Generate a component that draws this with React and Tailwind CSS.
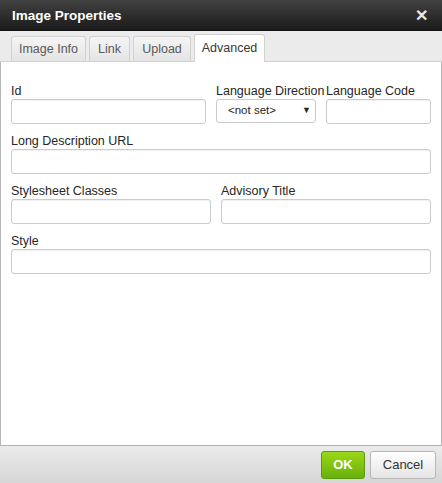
export default function App() {
  const font = { fontFamily: '"Liberation Sans", Arial, sans-serif' };
  const inputCls =
    'h-[25px] w-full rounded-[3px] border border-[#c9cccf] bg-white shadow-[inset_0_1px_1px_rgba(0,0,0,0.06)]';
  const labelCls = 'h-[16px] whitespace-nowrap leading-[17px]';
  const tabs = [
    { label: 'Image Info', w: 'w-[75px]' },
    { label: 'Link', w: 'w-[41px]' },
    { label: 'Upload', w: 'w-[58px]' },
  ];

  return (
    <div className="flex h-[483px] w-[442px] flex-col bg-white text-[12.5px] text-[#262626]" style={font}>
      {/* Title bar */}
      <div className="flex h-[31px] items-center justify-between border-b border-[#151515] bg-gradient-to-b from-[#424242] to-[#1b1b1b] pl-3 pr-[14px] pt-[2px]">
        <span className="text-[13.5px] font-bold text-white">Image Properties</span>
        <span className="text-[16px] font-bold leading-none text-[#e6e6e6]">✕</span>
      </div>

      {/* Tabs */}
      <div className="flex h-[31px] items-end gap-[3px] border-b border-[#d1d1d1] bg-[#ebebeb] px-[11px]">
        {tabs.map((t) => (
          <div
            key={t.label}
            className={`flex h-[25px] items-center justify-center rounded-t-[3px] border border-b-0 border-[#d1d1d1] bg-gradient-to-b from-[#f5f5f5] to-[#e4e4e4] text-[#595959] ${t.w}`}
          >
            {t.label}
          </div>
        ))}
        <div className="-mb-px flex h-[28px] w-[71px] items-center justify-center rounded-t-[3px] border border-b-0 border-[#d1d1d1] bg-white text-[#383838]">
          Advanced
        </div>
      </div>

      {/* Content */}
      <div className="flex flex-1 flex-col gap-[9px] border-x border-[#b6b6b6] px-[10px] pt-[21px]">
        <div className="flex gap-[10px]">
          <div className="w-[195px]">
            <div className={labelCls}>Id</div>
            <div className={inputCls} />
          </div>
          <div className="w-[100px]">
            <div className={labelCls}>Language Direction</div>
            <div className="flex h-[24px] items-center justify-between rounded-[3px] border border-[#c9cccf] bg-white pl-[11px] pr-[4px] text-[11.5px]">
              <span>&lt;not set&gt;</span>
              <span className="text-[9px]">▼</span>
            </div>
          </div>
          <div className="w-[105px]">
            <div className={labelCls}>Language Code</div>
            <div className={inputCls} />
          </div>
        </div>

        <div>
          <div className={labelCls}>Long Description URL</div>
          <div className={inputCls} />
        </div>

        <div className="flex gap-[10px]">
          <div className="w-[200px]">
            <div className={labelCls}>Stylesheet Classes</div>
            <div className={inputCls} />
          </div>
          <div className="flex-1">
            <div className={labelCls}>Advisory Title</div>
            <div className={inputCls} />
          </div>
        </div>

        <div>
          <div className={labelCls}>Style</div>
          <div className={inputCls} />
        </div>
      </div>

      {/* Footer */}
      <div className="flex h-[38px] items-center justify-end gap-[5px] border-t border-[#b2b2b2] bg-gradient-to-b from-[#ebebeb] to-[#d6d6d6] pr-[6px]">
        <div className="flex h-[28px] w-[44px] items-center justify-center rounded-[3px] border border-[#5b9a0e] bg-gradient-to-b from-[#9ad717] to-[#69b10b] text-[13px] font-bold text-white">
          OK
        </div>
        <div className="flex h-[28px] w-[66px] items-center justify-center rounded-[3px] border border-[#b6b6b6] bg-gradient-to-b from-white to-[#e4e4e4] text-[13px] text-[#333]">
          Cancel
        </div>
      </div>
    </div>
  );
}
